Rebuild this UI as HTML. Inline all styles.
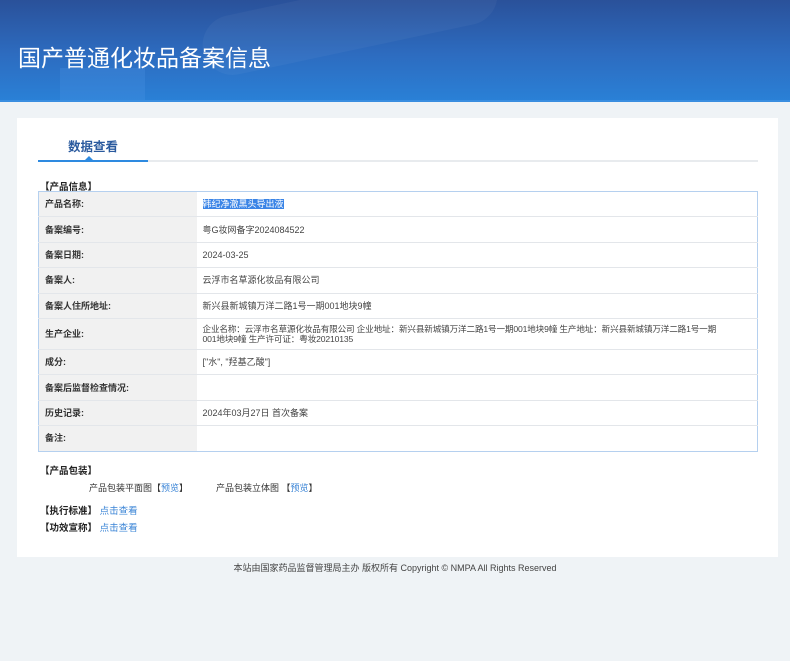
<!DOCTYPE html>
<html><head><meta charset="utf-8"><style>
*{margin:0;padding:0;box-sizing:border-box}
body{width:790px;height:661px;background:#eff3f6;font-family:"Liberation Sans","Noto Sans CJK SC",sans-serif;color:#333;position:relative;overflow:hidden}
.hd{position:absolute;left:0;top:0;width:790px;height:102px;background:linear-gradient(180deg,#2a519a 0%,#2d6cc0 55%,#2a80d6 100%);border-bottom:2px solid #3a8ee0;overflow:hidden}
.hd .g1{position:absolute;left:200px;top:-10px;width:300px;height:60px;border-radius:30px;background:rgba(255,255,255,.04);transform:rotate(-12deg)}
.hd .g2{position:absolute;left:60px;top:68px;width:85px;height:34px;background:rgba(80,150,230,.25)}
.hd h1{position:absolute;left:18px;top:39px;font-size:23px;font-weight:normal;color:#fff;font-family:"Liberation Sans","Noto Sans CJK SC",sans-serif}
.card{position:absolute;left:17px;top:118px;width:761px;height:439px;background:#fff}
.tab{position:absolute;left:21px;top:18px;width:110px;text-align:center;font-size:12.5px;color:#2a5a9e;font-weight:bold}
.tl{position:absolute;left:21px;top:42px;width:720px;height:2px;background:#e8ebee}
.tl2{position:absolute;left:21px;top:42px;width:110px;height:2px;background:#2e8ae0}
.tri{position:absolute;left:68px;top:38px;width:0;height:0;border-left:4px solid transparent;border-right:4px solid transparent;border-bottom:4px solid #2e8ae0}
.sec{position:absolute;font-size:9.5px;font-weight:bold;color:#222}
table{position:absolute;left:21px;top:73px;width:720px;border-collapse:collapse;border:1px solid #b5d0ef;font-size:9px}
td{border-bottom:1px solid #e3e6ea;height:25.4px;padding:0 6px;vertical-align:middle;line-height:10px}
td.l{width:158px;background:#f1f1f1;font-weight:bold;color:#333}
td.v{color:#444}
.sel{background:#3a84e6;color:#fff}
.t{position:absolute;font-size:9px;color:#333}
a{color:#3a84d6;text-decoration:none}
.ft{position:absolute;left:0;top:561px;width:790px;text-align:center;font-size:9px;color:#444}
</style></head><body>
<div class="hd"><div class="g1"></div><div class="g2"></div><h1>国产普通化妆品备案信息</h1></div>
<div class="card">
<div class="tab">数据查看</div>
<div class="tl"></div><div class="tl2"></div><div class="tri"></div>
<div class="sec" style="left:23px;top:61px">【产品信息】</div>
<table>
<tr><td class="l">产品名称:</td><td class="v"><span class="sel">韩纪净澈黑头导出液</span></td></tr>
<tr><td class="l">备案编号:</td><td class="v">粤G妆网备字2024084522</td></tr>
<tr><td class="l">备案日期:</td><td class="v">2024-03-25</td></tr>
<tr><td class="l">备案人:</td><td class="v">云浮市名草源化妆品有限公司</td></tr>
<tr><td class="l">备案人住所地址:</td><td class="v">新兴县新城镇万洋二路1号一期001地块9幢</td></tr>
<tr><td class="l" style="height:31px">生产企业:</td><td class="v" style="height:31px;white-space:nowrap;font-size:8.6px;letter-spacing:-0.15px">企业名称：云浮市名草源化妆品有限公司 企业地址：新兴县新城镇万洋二路1号一期001地块9幢 生产地址：新兴县新城镇万洋二路1号一期<br>001地块9幢 生产许可证：粤妆20210135</td></tr>
<tr><td class="l">成分:</td><td class="v">["水", "羟基乙酸"]</td></tr>
<tr><td class="l">备案后监督检查情况:</td><td class="v"></td></tr>
<tr><td class="l">历史记录:</td><td class="v">2024年03月27日 首次备案</td></tr>
<tr><td class="l" style="border-bottom:none">备注:</td><td class="v" style="border-bottom:none"></td></tr>
</table>
<div class="sec" style="left:23px;top:345px">【产品包装】</div>
<div class="t" style="left:72px;top:363px">产品包装平面图【<a>预览</a>】</div>
<div class="t" style="left:199px;top:363px">产品包装立体图 【<a>预览</a>】</div>
<div class="sec" style="left:23px;top:385px">【执行标准】 <a style="font-weight:normal">点击查看</a></div>
<div class="sec" style="left:23px;top:402px">【功效宣称】 <a style="font-weight:normal">点击查看</a></div>
</div>
<div class="ft">本站由国家药品监督管理局主办 版权所有 Copyright © NMPA All Rights Reserved</div>
</body></html>
